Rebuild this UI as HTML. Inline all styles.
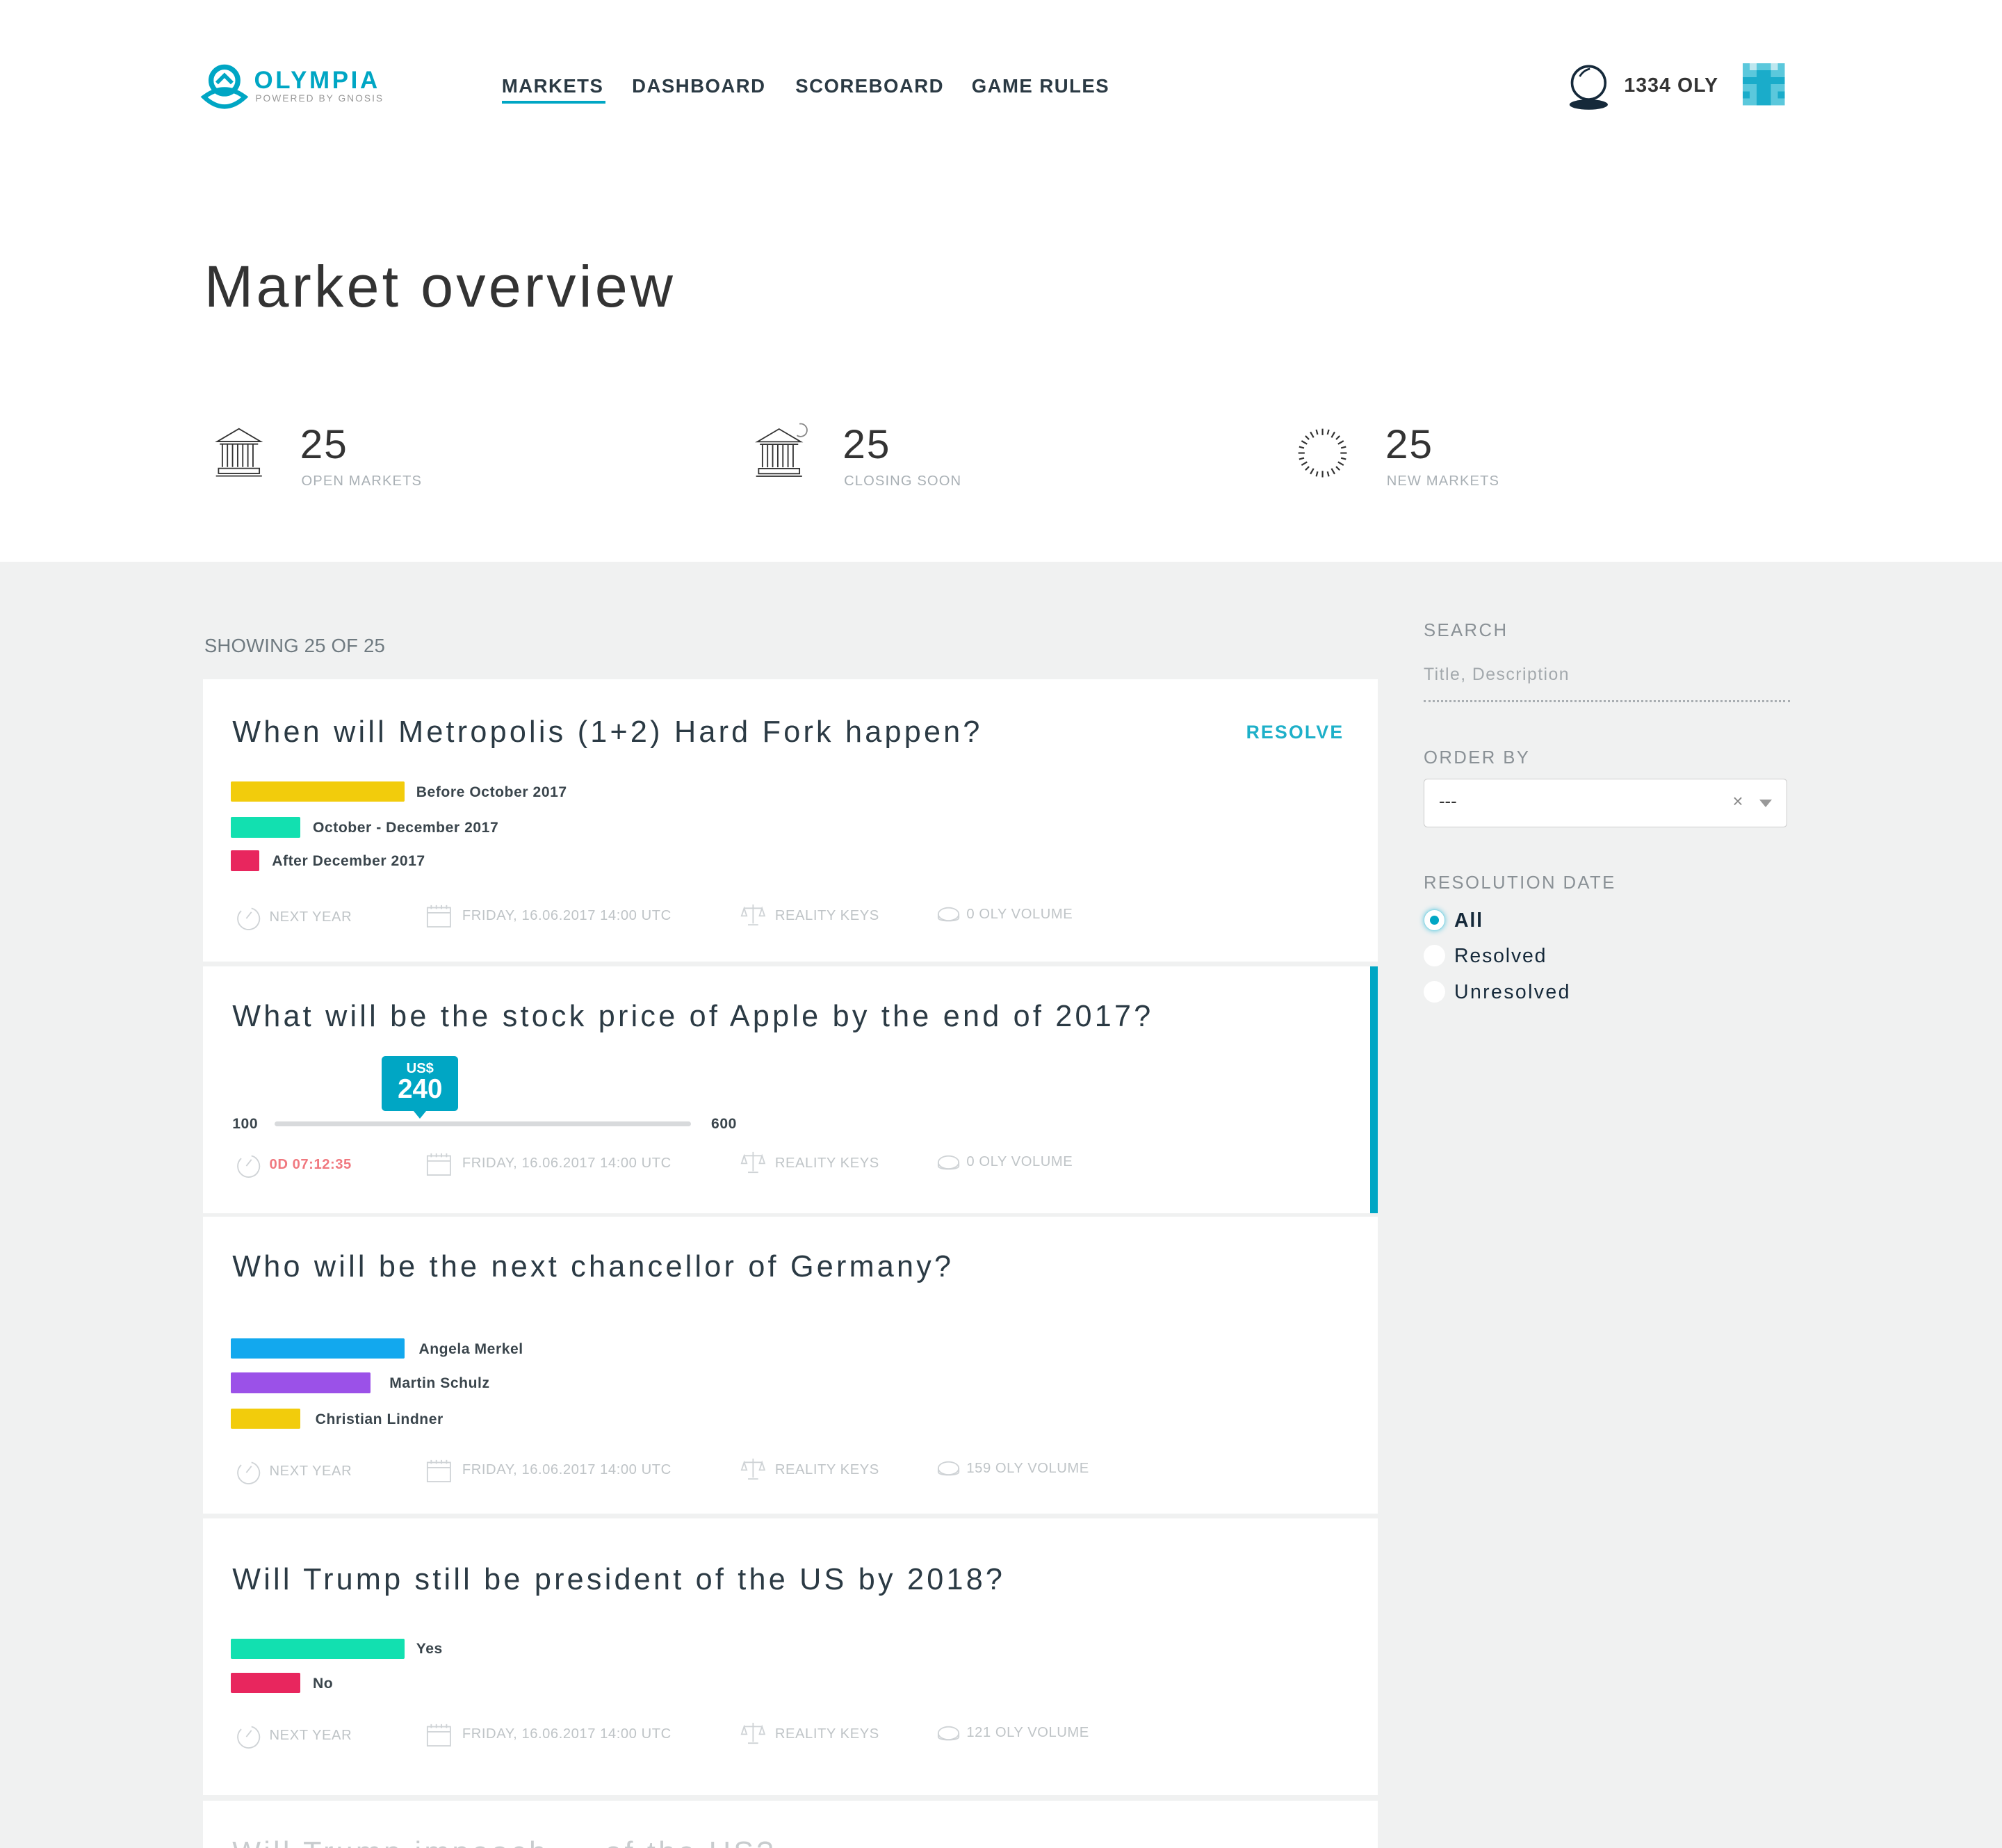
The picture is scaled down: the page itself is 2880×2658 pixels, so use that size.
<!DOCTYPE html>
<html><head><meta charset="utf-8"><style>
*{margin:0;padding:0;box-sizing:border-box}
html,body{width:2880px;height:2658px;overflow:hidden;background:#fff}
#r{zoom:1.83673;width:1568px;height:1448px;position:relative;font-family:"Liberation Sans",sans-serif;color:#2b3a44}
.a{position:absolute;white-space:nowrap}
.nav{font-size:15px;font-weight:bold;letter-spacing:.8px;color:#2b3a44;top:59px}
.gray{position:absolute;left:0;top:440px;width:1568px;height:1010px;background:#f0f1f1}
.card{position:absolute;left:159px;width:920px;background:#fff}
.t{position:absolute;left:23px;font-size:23.5px;letter-spacing:2.3px;color:#2b3a44}
.bar{position:absolute;left:22px;height:16px;border-radius:1px}
.bl{position:absolute;font-size:11.5px;font-weight:bold;color:#3a454c;letter-spacing:.3px}
.m{position:absolute;font-size:11px;color:#bfc4c7;letter-spacing:.3px}
.num{font-size:32px;color:#333;letter-spacing:1px}
.lab{font-size:11px;color:#a9b0b5;letter-spacing:.6px}
.sl{font-size:14px;letter-spacing:1.3px;color:#8a9196}
.rad{position:absolute;left:1115px;width:17px;height:17px;border-radius:50%;background:#fff}
</style></head><body><div id="r">
<svg class="a" style="left:157px;top:49px" width="40" height="38" viewBox="0 0 40 38"><circle cx="19" cy="14" r="10.5" fill="none" stroke="#00a6c4" stroke-width="4"/><path d="M13 16 L19 10 L25 16" fill="none" stroke="#00a6c4" stroke-width="3"/><path d="M3 27 Q19 15 35 27 Q19 42 3 27Z" fill="none" stroke="#00a6c4" stroke-width="3.5"/></svg>
<div class="a" style="left:199px;top:52px;font-size:19px;font-weight:bold;color:#00a6c4;letter-spacing:2px">OLYMPIA</div>
<div class="a" style="left:200px;top:73px;font-size:7.5px;color:#999;letter-spacing:1.1px">POWERED BY GNOSIS</div>
<div class="a nav" style="left:393px">MARKETS</div>
<div class="a" style="left:393px;top:79px;width:81px;height:2px;background:#00a6c4"></div>
<div class="a nav" style="left:495px">DASHBOARD</div>
<div class="a nav" style="left:623px">SCOREBOARD</div>
<div class="a nav" style="left:761px">GAME RULES</div>
<svg class="a" style="left:1228px;top:48px" width="34" height="40" viewBox="0 0 34 40"><circle cx="16" cy="17" r="13" fill="none" stroke="#15293a" stroke-width="2"/><path d="M9 12 Q12 7 17 6" fill="none" stroke="#15293a" stroke-width="1.5"/><ellipse cx="16" cy="34" rx="15" ry="4" fill="#15293a"/></svg>
<div class="a" style="left:1272px;top:58px;font-size:15.5px;font-weight:bold;color:#333;letter-spacing:.6px">1334 OLY</div>
<svg class="a" style="left:1365px;top:49px" width="33" height="34" viewBox="0 0 6 6" shape-rendering="crispEdges"><rect width="6" height="6" fill="#5bc8dc"/><rect x="1" y="0" width="1" height="1" fill="#bde7ef"/><rect x="4" y="0" width="1" height="1" fill="#bde7ef"/><rect x="0" y="2" width="6" height="1" fill="#1aacca"/><rect x="2" y="1" width="2" height="5" fill="#1aacca"/><rect x="0" y="4" width="1" height="1" fill="#1aacca"/><rect x="5" y="4" width="1" height="1" fill="#1aacca"/></svg>
<div class="a" style="left:160px;top:198px;font-size:46px;color:#333;letter-spacing:2.3px;font-weight:300">Market overview</div>
<svg class="a" style="left:167px;top:334px" width="40" height="42" viewBox="0 0 40 42" fill="none" stroke="#333" stroke-width="1"><path d="M3 12 L20 2 L37 12Z M5 14 H35 M7 14 V32 M11 14V32 M15 14V32 M19 14V32 M23 14V32 M27 14V32 M31 14V32 M4 33H36V37H4Z M2 39H38"/></svg>
<div class="a num" style="left:235px;top:330px">25</div><div class="a lab" style="left:236px;top:371px">OPEN MARKETS</div>
<svg class="a" style="left:590px;top:330px" width="46" height="46" viewBox="0 0 46 46" fill="none" stroke="#333" stroke-width="1"><path d="M3 16 L20 6 L37 16Z M5 18 H35 M7 18 V36 M11 18V36 M15 18V36 M19 18V36 M23 18V36 M27 18V36 M31 18V36 M4 37H36V41H4Z M2 43H38"/><path d="M36 2 A5 5 0 1 1 34 11" stroke="#888"/></svg>
<div class="a num" style="left:660px;top:330px">25</div><div class="a lab" style="left:661px;top:371px">CLOSING SOON</div>
<svg class="a" style="left:1015px;top:334px" width="42" height="42" viewBox="0 0 42 42" stroke="#333" stroke-width="1.2"><path d="M21 2V7M21 35V40M2 21H7M35 21H40"/><g transform="rotate(30 21 21)"><path d="M21 2V7M21 35V40M2 21H7M35 21H40"/></g><g transform="rotate(60 21 21)"><path d="M21 2V7M21 35V40M2 21H7M35 21H40"/></g><g transform="rotate(15 21 21)"><path d="M21 2V6M21 36V40M2 21H6M36 21H40"/></g><g transform="rotate(45 21 21)"><path d="M21 2V6M21 36V40M2 21H6M36 21H40"/></g><g transform="rotate(75 21 21)"><path d="M21 2V6M21 36V40M2 21H6M36 21H40"/></g></svg>
<div class="a num" style="left:1085px;top:330px">25</div><div class="a lab" style="left:1086px;top:371px">NEW MARKETS</div>
<div class="gray"></div>
<div class="a" style="left:160px;top:497px;font-size:15px;color:#6f7a80;letter-spacing:.1px">SHOWING 25 OF 25</div>

<div class="card" style="top:532px;height:221px">
<div class="t" style="top:28px">When will Metropolis (1+2) Hard Fork happen?</div>
<div class="a" style="left:817px;top:33px;font-size:14.5px;font-weight:bold;color:#1eb0c9;letter-spacing:1.2px">RESOLVE</div>
<div class="bar" style="top:80px;width:136px;background:#f2cc0c"></div><div class="bl" style="left:167px;top:82px">Before October 2017</div>
<div class="bar" style="top:108px;width:54px;background:#12e0b0"></div><div class="bl" style="left:86px;top:110px">October - December 2017</div>
<div class="bar" style="top:134px;width:22px;background:#e8265e"></div><div class="bl" style="left:54px;top:136px">After December 2017</div>
</div>
<div class="card" style="top:757px;height:193px">
<div class="t" style="top:26px">What will be the stock price of Apple by the end of 2017?</div>
<div class="a" style="left:914px;top:0;width:6px;height:193px;background:#00a6c4"></div>
<div class="a" style="left:140px;top:70px;width:60px;height:43px;background:#00a6c4;border-radius:3px;color:#fff;text-align:center"><div style="font-size:11px;font-weight:bold;margin-top:4px">US$</div><div style="font-size:21px;line-height:20px;font-weight:bold">240</div></div>
<div class="a" style="left:165px;top:113px;border:5px solid transparent;border-top:6px solid #00a6c4"></div>
<div class="bl" style="left:23px;top:117px">100</div>
<div class="a" style="left:56px;top:121px;width:326px;height:4px;background:#d8dadc;border-radius:2px"></div>
<div class="bl" style="left:398px;top:117px">600</div>
</div>
<div class="card" style="top:953px;height:232px">
<div class="t" style="top:26px">Who will be the next chancellor of Germany?</div>
<div class="bar" style="top:95px;width:136px;background:#12a8ee"></div><div class="bl" style="left:169px;top:97px">Angela Merkel</div>
<div class="bar" style="top:122px;width:109px;background:#9b51e8"></div><div class="bl" style="left:146px;top:124px">Martin Schulz</div>
<div class="bar" style="top:150px;width:54px;background:#f2cc0c"></div><div class="bl" style="left:88px;top:152px">Christian Lindner</div>
</div>
<div class="card" style="top:1189px;height:217px">
<div class="t" style="top:35px">Will Trump still be president of the US by 2018?</div>
<div class="bar" style="top:94px;width:136px;background:#12e0b0"></div><div class="bl" style="left:167px;top:96px">Yes</div>
<div class="bar" style="top:121px;width:54px;background:#e8265e"></div><div class="bl" style="left:86px;top:123px">No</div>
</div>
<div class="card" style="top:1410px;height:40px"><div class="t" style="top:28px;color:#c8ccce">Will Trump impeach ... of the US?</div></div>

<svg width="0" height="0" style="position:absolute"><defs>
<g id="clk" fill="none" stroke="#cfd3d6" stroke-width="1"><path d="M14 4 A8.5 8.5 0 1 1 6 6"/><path d="M10 12 L14 7"/></g>
<g id="cal" fill="none" stroke="#cfd3d6" stroke-width="1"><rect x="1" y="3" width="18" height="15"/><path d="M1 7H19M4 1V4M8 1V4M12 1V4M16 1V4"/></g>
<g id="sc" fill="none" stroke="#cfd3d6" stroke-width="1"><path d="M10 1V16M3 4H17M3 4L1 10H5ZM17 4L15 10H19ZM6 17H14"/></g>
<g id="co" fill="none" stroke="#cfd3d6" stroke-width="1"><ellipse cx="9" cy="7" rx="8" ry="5"/><path d="M1 7V10C1 13 17 13 17 10V7"/></g>
</defs></svg>
<div id="metas"></div>
<script>
var rows=[[709,"NEXT YEAR","0 OLY VOLUME",0],[903,"0D 07:12:35","0 OLY VOLUME",1],[1143,"NEXT YEAR","159 OLY VOLUME",0],[1350,"NEXT YEAR","121 OLY VOLUME",0]];
var h="";rows.forEach(function(r){var y=r[0];
h+='<svg class="a" style="left:183px;top:'+(y-2)+'px" width="22" height="22"><use href="#clk"/></svg>';
h+='<div class="m" style="left:211px;top:'+(y+3)+'px;'+(r[3]?'color:#f0787f;font-weight:bold':'')+'">'+r[1]+'</div>';
h+='<svg class="a" style="left:334px;top:'+(y-1)+'px" width="22" height="20"><use href="#cal"/></svg>';
h+='<div class="m" style="left:362px;top:'+(y+2)+'px">FRIDAY, 16.06.2017 14:00 UTC</div>';
h+='<svg class="a" style="left:580px;top:'+(y-2)+'px" width="22" height="20"><use href="#sc"/></svg>';
h+='<div class="m" style="left:607px;top:'+(y+2)+'px">REALITY KEYS</div>';
h+='<svg class="a" style="left:734px;top:'+(y)+'px" width="20" height="16"><use href="#co"/></svg>';
h+='<div class="m" style="left:757px;top:'+(y+1)+'px">'+r[2]+'</div>';});
document.getElementById("metas").innerHTML=h;
</script>

<div class="a sl" style="left:1115px;top:486px">SEARCH</div>
<div class="a" style="left:1115px;top:521px;font-size:13.5px;color:#a3a9ad;letter-spacing:.8px">Title, Description</div>
<div class="a" style="left:1115px;top:548px;width:287px;border-top:2px dotted #a9aeb2"></div>
<div class="a sl" style="left:1115px;top:586px">ORDER BY</div>
<div class="a" style="left:1115px;top:610px;width:285px;height:38px;background:#fff;border:1px solid #ccc;border-radius:3px"></div>
<div class="a" style="left:1127px;top:620px;font-size:14px;color:#333">---</div>
<div class="a" style="left:1357px;top:620px;font-size:14px;color:#888">×</div>
<div class="a" style="left:1378px;top:626px;border:5px solid transparent;border-top:6px solid #999"></div>
<div class="a sl" style="left:1115px;top:684px">RESOLUTION DATE</div>
<div class="rad" style="top:712px;border:1px solid #8fd8e6;box-shadow:0 0 4px #5cc9e0"></div>
<div class="a" style="left:1120px;top:717px;width:7px;height:7px;border-radius:50%;background:#00a6c4"></div>
<div class="a" style="left:1139px;top:712px;font-size:15.5px;font-weight:bold;color:#15293a;letter-spacing:1px">All</div>
<div class="rad" style="top:740px"></div>
<div class="a" style="left:1139px;top:740px;font-size:15.5px;color:#15293a;letter-spacing:1px">Resolved</div>
<div class="rad" style="top:768px"></div>
<div class="a" style="left:1139px;top:768px;font-size:15.5px;color:#15293a;letter-spacing:1.3px">Unresolved</div>
</div></body></html>
